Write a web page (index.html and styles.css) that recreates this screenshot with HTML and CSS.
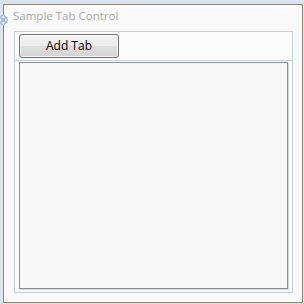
FILE: index.html
```html
<!DOCTYPE html>
<html>
<head>
<meta charset="utf-8">
<link rel="stylesheet" href="styles.css">
</head>
<body>
<div class="window">
  <div class="title">Sample Tab Control</div>
  <div class="tabs">
    <div class="header">
      <button class="btn">Add Tab</button>
    </div>
    <div class="content">
      <div class="panel"></div>
    </div>
  </div>
</div>
<svg class="grip" width="11" height="12" viewBox="0 0 11 12">
  <circle cx="5" cy="6" r="5" fill="#a3bcd8"/>
  <path d="M5 1.5 L3.2 3.8 H6.8 Z M5 10.5 L3.2 8.2 H6.8 Z M0.8 6 L3 4.2 V7.8 Z M9.2 6 L7 4.2 V7.8 Z" fill="#f2f6fa"/>
</svg>
</body>
</html>
```
FILE: styles.css
```css
html, body {
  margin: 0;
  padding: 0;
}
body {
  width: 304px;
  height: 304px;
  background: #dde3ea;
  position: relative;
  overflow: hidden;
  font-family: "Open Sans", "Noto Sans", sans-serif;
}
.window {
  margin: 4px 0 0 3px;
  width: 298px;
  height: 297px;
  border: 1px solid #8d867c;
  background: #fafafa;
  display: flex;
  flex-direction: column;
}
.title {
  height: 26px;
  padding-left: 9px;
  padding-top: 3px;
  box-sizing: border-box;
  font-size: 11.5px;
  line-height: 16px;
  color: #a8a8a8;
}
.tabs {
  margin-left: 10px;
  width: 277px;
  height: 260px;
  border: 1px solid #c6d0da;
  background: #fbfbfb;
  display: flex;
  flex-direction: column;
}
.header {
  height: 29px;
  box-sizing: border-box;
  padding: 2px 0 0 4px;
  border-bottom: 1px solid #c6d0da;
}
.btn {
  display: block;
  width: 100px;
  height: 24px;
  margin: 0;
  padding: 0;
  border: 1px solid #707070;
  border-radius: 3px;
  background: linear-gradient(#f4f4f4 0%, #ececec 48%, #dfdfdf 52%, #d2d2d2 100%);
  box-shadow: inset 0 0 0 1px rgba(255,255,255,0.7);
  font-family: "Open Sans", "Noto Sans", sans-serif;
  font-size: 12px;
  color: #000;
  line-height: 20px;
}
.content {
  flex: 1;
  padding: 1px 4px 3px 4px;
  display: flex;
}
.panel {
  flex: 1;
  border: 1px solid #8c9095;
  background: #f7f7f7;
  box-shadow: 1px 1px 0 #d3d9e0;
}
.grip {
  position: absolute;
  left: -2px;
  top: 14px;
}
```
